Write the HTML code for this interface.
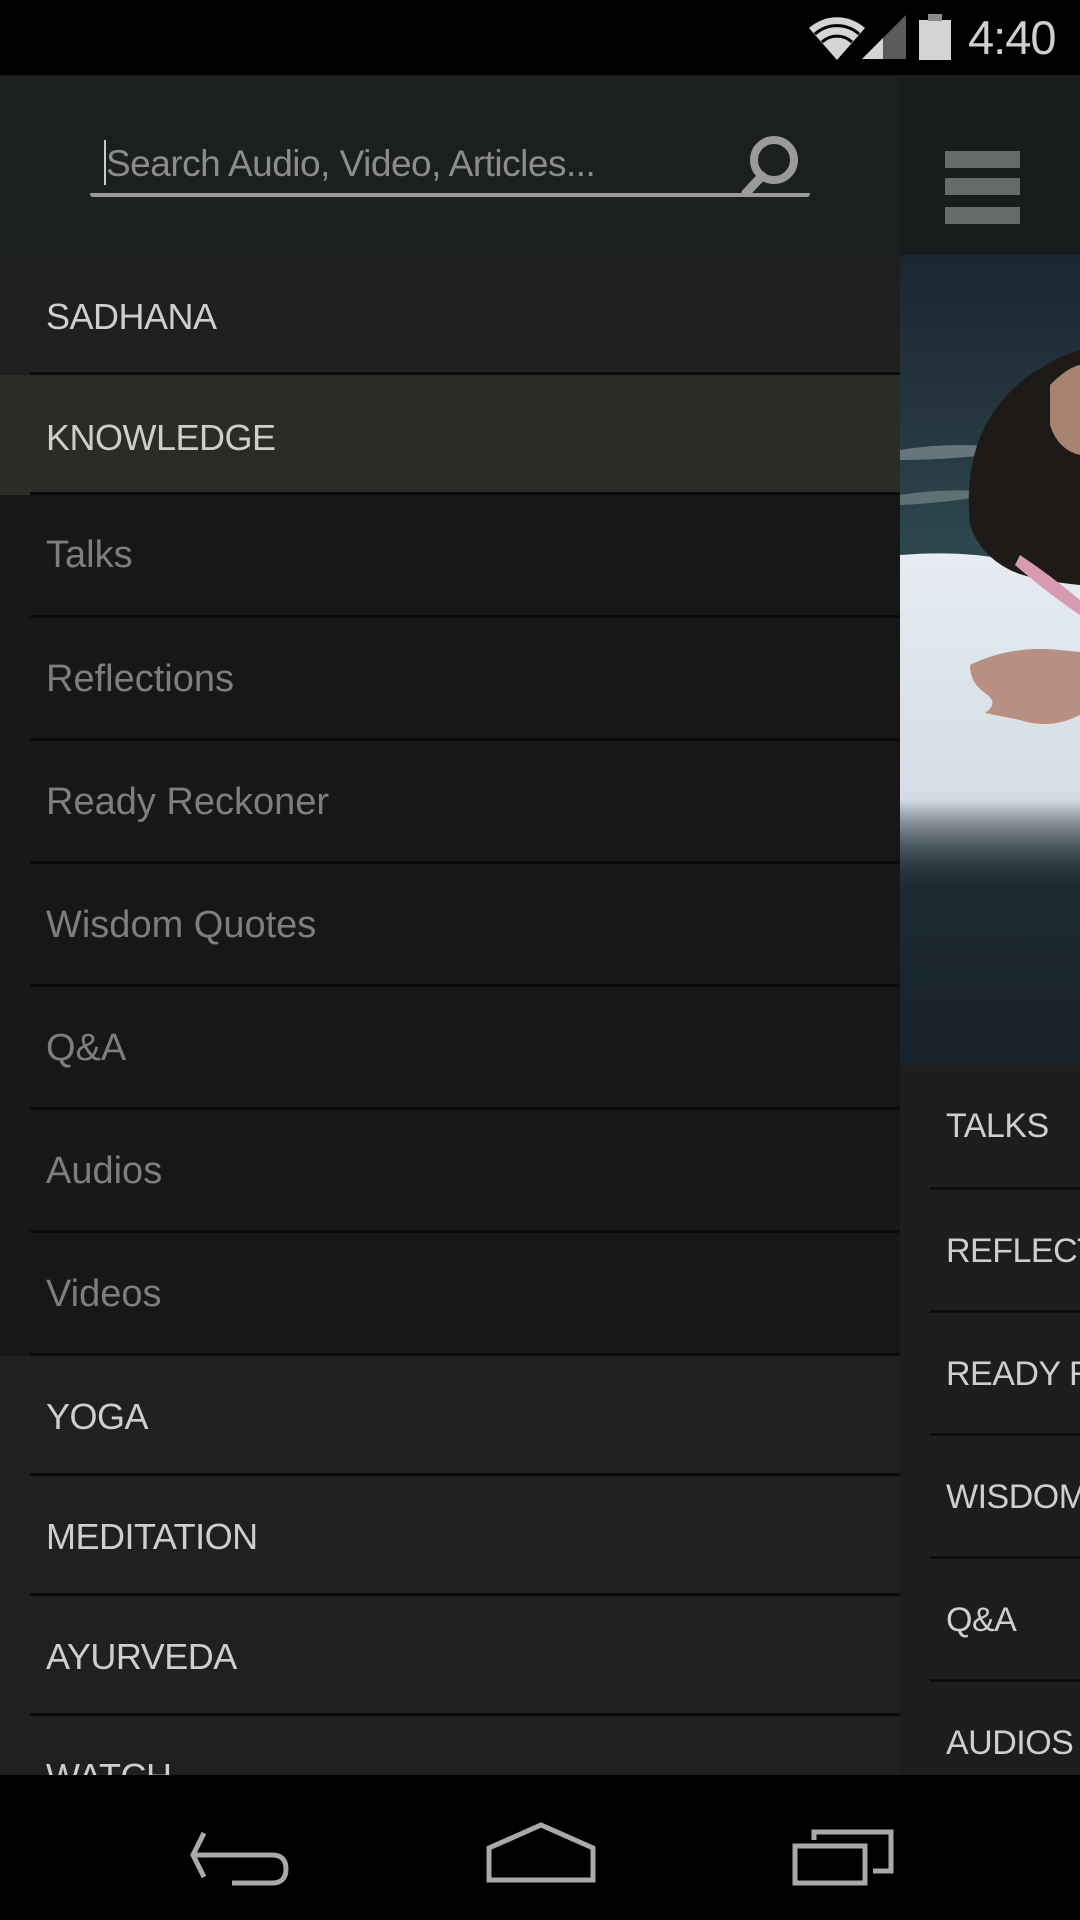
<!DOCTYPE html>
<html><head><meta charset="utf-8"><style>
*{margin:0;padding:0;box-sizing:border-box}
html,body{width:1080px;height:1920px;overflow:hidden}
body{background:#000;position:relative;font-family:"Liberation Sans",Arial,sans-serif}
.a{position:absolute}
.row{position:absolute;left:0;width:900px}
.row .t{position:absolute;left:46px;font-size:36px;letter-spacing:-0.5px}
.row .t.sub{font-size:38px;letter-spacing:0}
.row .d{position:absolute;left:30px;right:0;bottom:0;height:3px;background:#0b0b0b}
.up{color:#d2cdcd}
.sub{color:#7e7e7e}
.rr{position:absolute;left:900px;width:180px;background:#1d1d1d;overflow:hidden}
.rr .t{position:absolute;left:46px;font-size:34px;color:#d2cdcd;white-space:nowrap;letter-spacing:-0.5px}
.rr .d{position:absolute;left:30px;right:0;bottom:0;height:3px;background:#0d0d0d}
</style></head><body>
<!-- status bar -->
<div class="a" style="left:0;top:0;width:1080px;height:75px;background:#000"></div>
<svg class="a" style="left:805px;top:12px" width="150" height="50" viewBox="0 0 150 50">
 <path d="M4 16 A42 42 0 0 1 60 16 L32 48 Z" fill="#d4d4d4"/>
 <path d="M10 22 A33 33 0 0 1 54 22" stroke="#000" stroke-width="3" fill="none"/>
 <path d="M17 30 A22 22 0 0 1 47 30" stroke="#000" stroke-width="3" fill="none"/>
 <path d="M57 47 L101 3 L101 47 Z" fill="#5a5a5a"/>
 <path d="M57 47 L78 26 L78 47 Z" fill="#d4d4d4"/>
 <rect x="114" y="8" width="32" height="40" fill="#d4d4d4"/>
 <rect x="123" y="2" width="14" height="7" fill="#8a8a8a"/>
</svg>
<div class="a" style="left:968px;top:10px;font-size:47px;color:#cfcfcf;letter-spacing:-1px">4:40</div>

<!-- right side -->
<div class="a" style="left:900px;top:75px;width:180px;height:180px;background:#191c1c"></div>
<div class="a" style="left:945px;top:151px;width:75px;height:17px;background:#676b68"></div>
<div class="a" style="left:945px;top:178px;width:75px;height:17px;background:#676b68"></div>
<div class="a" style="left:945px;top:207px;width:75px;height:17px;background:#676b68"></div>
<svg class="a" style="left:900px;top:255px" width="180" height="810" viewBox="0 0 180 810">
 <defs>
  <linearGradient id="bg" x1="0" y1="0" x2="0" y2="1">
   <stop offset="0" stop-color="#1a2630"/><stop offset="0.2" stop-color="#25363f"/><stop offset="0.38" stop-color="#2f4850"/><stop offset="0.5" stop-color="#23333b"/><stop offset="1" stop-color="#18222a"/>
  </linearGradient>
  <linearGradient id="robe" x1="0" y1="0" x2="0" y2="1">
   <stop offset="0" stop-color="#e6ecf2"/><stop offset="0.72" stop-color="#d4dde5"/><stop offset="1" stop-color="#1d2830" stop-opacity="0"/>
  </linearGradient>
 </defs>
 <rect width="180" height="810" fill="url(#bg)"/>
 <path d="M0 195 Q60 185 120 195 Q60 205 0 205Z" fill="#9aa8ac" opacity=".55"/>
 <path d="M0 240 Q50 232 100 238 Q50 248 0 250Z" fill="#b0b8b8" opacity=".4"/>
 <path d="M0 300 Q60 295 110 305 L180 330 L180 640 L0 640 Z" fill="url(#robe)"/>
 <path d="M70 270 Q60 170 130 120 Q160 100 180 95 L180 330 Q130 325 110 315 Q80 300 70 270Z" fill="#1d1a17"/>
 <path d="M150 130 Q168 112 180 110 L180 200 Q158 195 150 170Z" fill="#a88470"/>
 <path d="M120 300 Q150 320 180 345 L180 360 Q150 340 115 310Z" fill="#d69bb0"/>
 <path d="M70 410 Q110 390 160 395 L180 397 L180 460 Q150 475 120 465 L85 458 Q100 448 85 438 Q70 428 70 410Z" fill="#b88f80"/>
</svg>
<div class="rr" style="top:1065px;height:125px"><div class="t" style="top:42px">TALKS</div><div class="d"></div></div>
<div class="rr" style="top:1190px;height:123px"><div class="t" style="top:42px">REFLECTIONS</div><div class="d"></div></div>
<div class="rr" style="top:1313px;height:123px"><div class="t" style="top:42px">READY RECKONER</div><div class="d"></div></div>
<div class="rr" style="top:1436px;height:123px"><div class="t" style="top:42px">WISDOM QUOTES</div><div class="d"></div></div>
<div class="rr" style="top:1559px;height:123px"><div class="t" style="top:42px">Q&amp;A</div><div class="d"></div></div>
<div class="rr" style="top:1682px;height:93px"><div class="t" style="top:42px">AUDIOS</div></div>

<!-- drawer -->
<div class="a" style="left:0;top:75px;width:900px;height:180px;background:#1b1f1f"></div>
<div class="a" style="left:104px;top:140px;width:2px;height:45px;background:#ccc"></div>
<div class="a" style="left:106px;top:143px;font-size:37px;color:#8c8c8c;letter-spacing:-0.5px">Search Audio, Video, Articles...</div>
<div class="a" style="left:90px;top:193px;width:720px;height:4px;background:#9a9a9a;border-radius:0 0 3px 3px"></div>
<svg class="a" style="left:732px;top:133px" width="68" height="64" viewBox="0 0 68 64">
 <circle cx="42" cy="27" r="20" stroke="#9a9a9a" stroke-width="8" fill="none"/>
 <path d="M30 43 L14 60" stroke="#9a9a9a" stroke-width="9" stroke-linecap="round"/>
</svg>

<div class="row" style="top:255px;height:120px;background:#1f1f1e"><div class="t up" style="top:41px">SADHANA</div><div class="d"></div></div>
<div class="row" style="top:375px;height:120px;background:#2b2b27"><div class="t up" style="top:42px">KNOWLEDGE</div><div class="d"></div></div>
<div class="row" style="top:495px;height:123px;background:#171717"><div class="t sub" style="top:39px">Talks</div><div class="d"></div></div>
<div class="row" style="top:618px;height:123px;background:#171717"><div class="t sub" style="top:40px">Reflections</div><div class="d"></div></div>
<div class="row" style="top:741px;height:123px;background:#171717"><div class="t sub" style="top:40px">Ready Reckoner</div><div class="d"></div></div>
<div class="row" style="top:864px;height:123px;background:#171717"><div class="t sub" style="top:40px">Wisdom Quotes</div><div class="d"></div></div>
<div class="row" style="top:987px;height:123px;background:#171717"><div class="t sub" style="top:40px">Q&amp;A</div><div class="d"></div></div>
<div class="row" style="top:1110px;height:123px;background:#171717"><div class="t sub" style="top:40px">Audios</div><div class="d"></div></div>
<div class="row" style="top:1233px;height:123px;background:#171717"><div class="t sub" style="top:40px">Videos</div><div class="d"></div></div>
<div class="row" style="top:1356px;height:120px;background:#202020"><div class="t up" style="top:40px">YOGA</div><div class="d"></div></div>
<div class="row" style="top:1476px;height:120px;background:#202020"><div class="t up" style="top:40px">MEDITATION</div><div class="d"></div></div>
<div class="row" style="top:1596px;height:120px;background:#202020"><div class="t up" style="top:40px">AYURVEDA</div><div class="d"></div></div>
<div class="row" style="top:1716px;height:59px;background:#202020;overflow:hidden"><div class="t up" style="top:40px">WATCH</div></div>

<!-- nav bar -->
<div class="a" style="left:0;top:1775px;width:1080px;height:145px;background:#000"></div>
<svg class="a" style="left:0;top:1810px" width="1080" height="110" viewBox="0 0 1080 110">
 <g stroke="#a9a9a9" stroke-width="5" fill="none">
  <path d="M204 23 L193 45 L204 67"/>
  <path d="M193 45 L272 45 Q286 45 286 59 Q286 73 272 73 L232 73"/>
  <path d="M489 70 L489 38 L541 15 L593 38 L593 70 Z"/>
  <rect x="795" y="36" width="70" height="37"/>
  <path d="M814 30 L814 22 L891 22 L891 61 L873 61"/>
 </g>
</svg>
</body></html>
